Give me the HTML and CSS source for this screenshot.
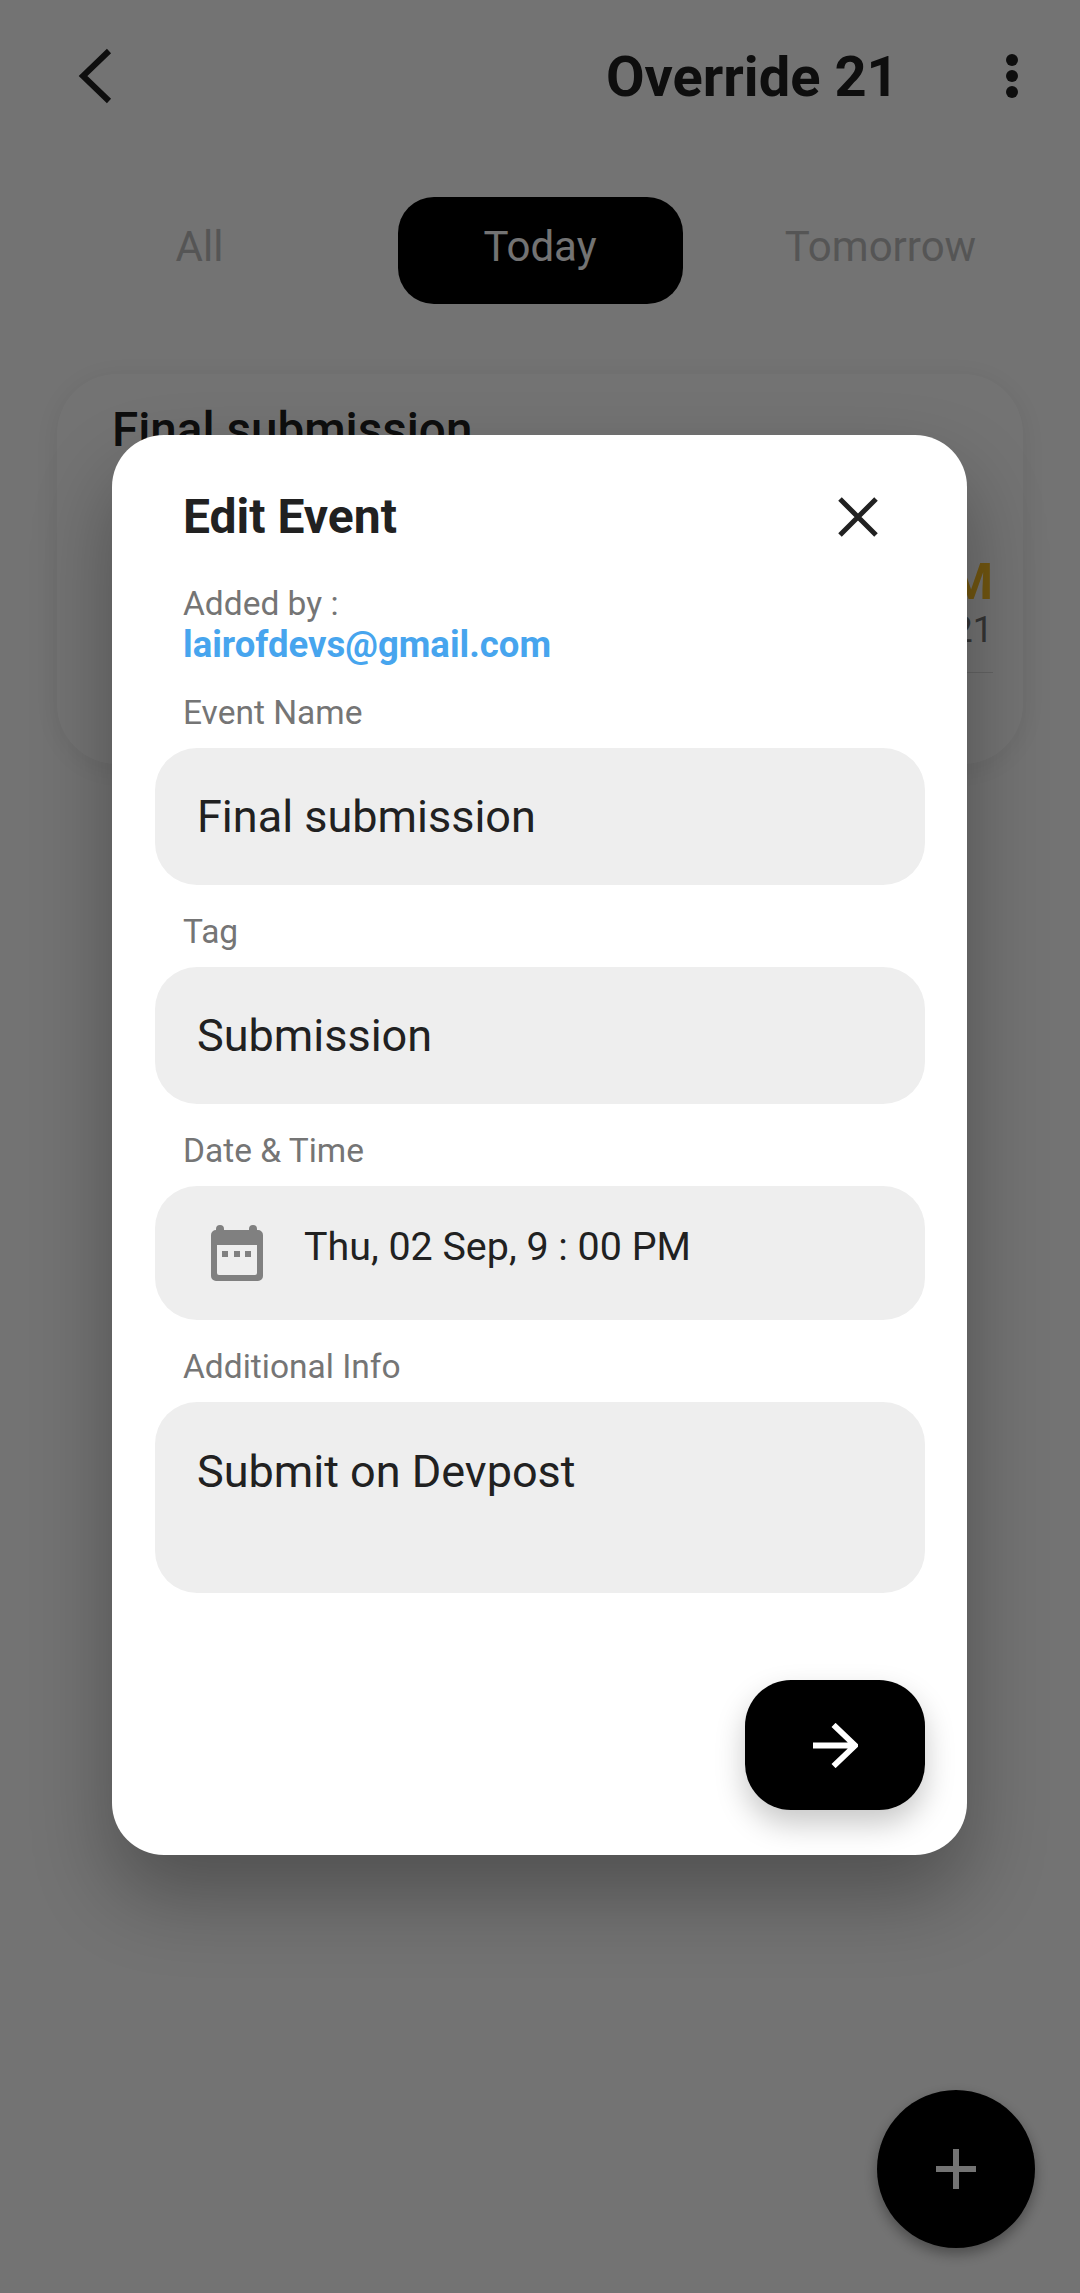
FILE: index.html
```html
<!DOCTYPE html>
<html lang="en">
<head>
  <meta charset="UTF-8" />
  <meta name="viewport" content="width=device-width, initial-scale=1" />
  <title>Override 21 - Edit Event</title>
  <link rel="stylesheet" href="styles.css">
</head>
<body>

<div class="page">
  <header class="topbar">
    <svg class="back-icon" viewBox="0 0 34 56" width="34" height="56">
      <path d="M31 3 L5 28 L31 53" />
    </svg>
    <h1 class="topbar-title">Override 21</h1>
    <div class="more-icon"><span></span><span></span><span></span></div>
  </header>

  <nav class="tabs">
    <div class="tab">All</div>
    <div class="tab tab-active">Today</div>
    <div class="tab">Tomorrow</div>
  </nav>

  <section class="event-card">
    <h2 class="event-title">Final submission</h2>
    <div class="event-when">
      <div class="event-time">9 : 00 PM</div>
      <div class="event-date">02 Sep, 2021</div>
      <div class="event-line"></div>
    </div>
  </section>

  <button class="fab">
    <svg viewBox="0 0 40 40" width="40" height="40"><path d="M20 0 V40 M0 20 H40" /></svg>
  </button>
</div>

<!-- Edit dialog over the dimmed page -->
<div class="scrim">
  <div class="dialog">
    <div class="dialog-head">
      <h2 class="dialog-title">Edit Event</h2>
      <svg class="close-icon" viewBox="0 0 40 40" width="40" height="40">
        <path d="M2 2 L38 38 M38 2 L2 38" />
      </svg>
    </div>

    <div class="added-label">Added by :</div>
    <div class="added-email">lairofdevs@gmail.com</div>

    <label class="field-label">Event Name</label>
    <div class="field field-text">Final submission</div>

    <label class="field-label">Tag</label>
    <div class="field field-text">Submission</div>

    <label class="field-label">Date &amp; Time</label>
    <div class="field field-date">
      <svg class="calendar-icon" viewBox="0 0 52 56" width="52" height="56">
        <path class="cal-body" fill-rule="evenodd" d="M9 0 a4 4 0 0 1 4 4 V5 H38 V4 a4 4 0 0 1 8 0 V5 H47 a5 5 0 0 1 5 5 V51 a5 5 0 0 1 -5 5 H5 a5 5 0 0 1 -5 -5 V10 a5 5 0 0 1 5 -5 H5 V4 a4 4 0 0 1 4 -4 Z M6 20 V48 a2 2 0 0 0 2 2 H44 a2 2 0 0 0 2 -2 V20 Z" />
        <rect class="cal-body" x="11" y="26" width="6" height="6" />
        <rect class="cal-body" x="23" y="26" width="6" height="6" />
        <rect class="cal-body" x="34" y="26" width="6" height="6" />
      </svg>
      <span class="date-text">Thu, 02 Sep, 9 : 00 PM</span>
    </div>

    <label class="field-label">Additional Info</label>
    <div class="field field-area">Submit on Devpost</div>

    <div class="dialog-foot">
      <button class="next-btn">
        <svg viewBox="0 0 46 46" width="45" height="45"><path d="M0 23 H42 M21 2 L43 23 L21 44" /></svg>
      </button>
    </div>
  </div>
</div>

</body>
</html>
```

FILE: styles.css
```css
* {
  box-sizing: border-box;
}

body {
  margin: 0;
  background: #fff;
  font-family: Roboto, "Noto Sans", sans-serif;
  color: #212121;
}

.page {
  position: relative;
  height: 2293px;
  overflow: hidden;
}

/* Top bar */
.topbar {
  display: flex;
  align-items: center;
  height: 152px;
  padding: 0 0 0 78px;
}

.back-icon {
  fill: none;
  stroke: #212121;
  stroke-width: 6;
}

.topbar-title {
  margin: 2px 0 0 494px;
  font-size: 56px;
  font-weight: 700;
  color: #212121;
  white-space: nowrap;
}

.more-icon {
  display: flex;
  flex-direction: column;
  gap: 4px;
  margin-left: 107px;
}

.more-icon span {
  width: 12px;
  height: 12px;
  border-radius: 50%;
  background: #212121;
}

/* Tabs */
.tabs {
  display: flex;
  justify-content: space-between;
  margin: 45px 57px 0;
}

.tab {
  width: 285px;
  height: 107px;
  padding-top: 26px;
  text-align: center;
  font-size: 42px;
  line-height: 47px;
  color: #bdbdbd;
}

.tab-active {
  background: #000;
  border-radius: 36px;
  color: #fff;
}

/* Card behind the dialog */
.event-card {
  display: flex;
  flex-direction: column;
  margin: 70px 57px 0;
  height: 390px;
  padding: 28px 30px 0 55px;
  background: #fff;
  border-radius: 60px;
  box-shadow: 0 4px 30px rgba(0, 0, 0, 0.08);
}

.event-title {
  margin: 0;
  font-size: 47.6px;
  line-height: 56px;
  font-weight: 500;
  color: #212121;
}

.event-when {
  align-self: flex-end;
  margin-top: 97px;
  text-align: right;
}

.event-time {
  font-size: 50px;
  line-height: 54px;
  font-weight: 700;
  color: #fbbf24;
}

.event-date {
  font-size: 36px;
  line-height: 42px;
  color: #757575;
}

.event-line {
  height: 1px;
  margin-top: 21px;
  background: #ddd;
}

.fab {
  position: absolute;
  left: 877px;
  top: 2090px;
  width: 158px;
  height: 158px;
  border: 0;
  border-radius: 50%;
  background: #000;
  display: flex;
  align-items: center;
  justify-content: center;
  box-shadow: 0 6px 14px rgba(0, 0, 0, 0.35);
}

.fab path {
  fill: none;
  stroke: #fff;
  stroke-width: 6;
}

/* Dialog */
.scrim {
  position: absolute;
  top: 0;
  left: 0;
  width: 1080px;
  height: 2293px;
  padding: 435px 113px 0 112px;
  background: rgba(0, 0, 0, 0.55);
}

.dialog {
  display: flex;
  flex-direction: column;
  height: 1420px;
  padding: 0 42px 0 43px;
  background: #fff;
  border-radius: 52px;
  box-shadow: 0 40px 80px rgba(0, 0, 0, 0.3);
}

.dialog-head {
  display: flex;
  flex: none;
  align-items: center;
  justify-content: space-between;
  height: 149px;
  padding: 14px 47px 0 28px;
}

.dialog-title {
  margin: 0;
  font-size: 48px;
  font-weight: 700;
  color: #212121;
}

.close-icon {
  fill: none;
  stroke: #212121;
  stroke-width: 5;
}

.added-label,
.field-label {
  display: block;
  padding-left: 28px;
  font-size: 33.5px;
  color: #757575;
}

.added-label {
  line-height: 39px;
}

.added-email {
  padding-left: 28px;
  font-size: 36.5px;
  line-height: 43px;
  font-weight: 700;
  color: #47a5ee;
}

.field-label {
  margin: 28px 0 16px;
  line-height: 38px;
}

.field {
  display: flex;
  flex: none;
  background: #eeeeee;
  border-radius: 42px;
  font-size: 45px;
  color: #212121;
}

.field-text {
  align-items: center;
  height: 137px;
  padding-left: 42px;
}

.field-date {
  align-items: center;
  height: 134px;
  padding-left: 56px;
}

.field-area {
  height: 191px;
  padding: 43px 0 0 42px;
}

.calendar-icon {
  flex: none;
}

.cal-body {
  fill: #808080;
}

.date-text {
  margin: -14px 0 0 41px;
  font-size: 39.4px;
}

.dialog-foot {
  display: flex;
  justify-content: flex-end;
  margin-top: 87px;
}

.next-btn {
  display: flex;
  align-items: center;
  justify-content: center;
  width: 180px;
  height: 130px;
  border: 0;
  border-radius: 46px;
  background: #000;
  box-shadow: 0 14px 30px rgba(0, 0, 0, 0.22);
}

.next-btn path {
  fill: none;
  stroke: #fff;
  stroke-width: 6;
}
```
